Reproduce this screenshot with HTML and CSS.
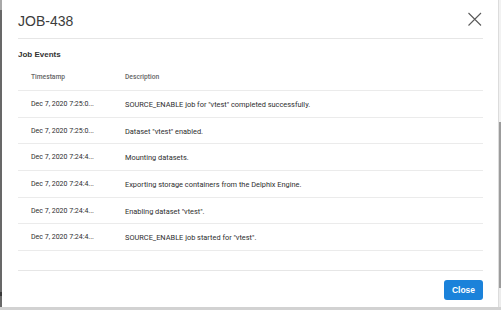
FILE: index.html
```html
<!DOCTYPE html>
<html lang="en">
<head>
  <meta charset="UTF-8">
  <title>JOB-438</title>
  <link rel="stylesheet" href="styles.css">
</head>
<body>
  <!-- page behind the overlay, left edge -->
  <div class="backdrop-edge"></div>

  <!-- Job details modal -->
  <div class="modal">
    <div class="modal-head">
      <span class="modal-title">JOB-438</span>
      <svg class="close-x" width="15" height="15" viewBox="0 0 15 15">
        <path d="M1.5 1 L14 13.5 M14 1 L1.5 13.5" stroke="#5a5a5a" stroke-width="1.1" fill="none"/>
      </svg>
    </div>

    <div class="modal-body">
      <h3>Job Events</h3>
      <div class="events">
        <div class="ev-row ev-head">
          <span>Timestamp</span>
          <span>Description</span>
        </div>
        <div class="ev-row">
          <span class="ts">Dec 7, 2020 7:25:0...</span>
          <span>SOURCE_ENABLE job for "vtest" completed successfully.</span>
        </div>
        <div class="ev-row">
          <span class="ts">Dec 7, 2020 7:25:0...</span>
          <span>Dataset "vtest" enabled.</span>
        </div>
        <div class="ev-row">
          <span class="ts">Dec 7, 2020 7:24:4...</span>
          <span>Mounting datasets.</span>
        </div>
        <div class="ev-row">
          <span class="ts">Dec 7, 2020 7:24:4...</span>
          <span>Exporting storage containers from the Delphix Engine.</span>
        </div>
        <div class="ev-row">
          <span class="ts">Dec 7, 2020 7:24:4...</span>
          <span>Enabling dataset "vtest".</span>
        </div>
        <div class="ev-row">
          <span class="ts">Dec 7, 2020 7:24:4...</span>
          <span>SOURCE_ENABLE job started for "vtest".</span>
        </div>
      </div>
    </div>

    <div class="modal-foot">
      <button type="button">Close</button>
    </div>
  </div>

  <!-- page scrollbar, right edge -->
  <div class="page-scroll"></div>
</body>
</html>
```

FILE: styles.css
```css
body {
  margin: 0;
  height: 310px;
  display: flex;
  align-items: flex-start;
  background: #d2d2d2;
  font-family: 'Liberation Sans', Arial, sans-serif;
  overflow: hidden;
}

.backdrop-edge {
  width: 2px;
  height: 307px;
  background: linear-gradient(#a8a8a8 0, #a8a8a8 10px, #686868 10px, #686868 292px, #3a3a3a 292px, #3a3a3a 296px, #686868 296px);
}

/* Modal */
.modal {
  flex: 1;
  height: 307px;
  background: #fff;
  display: flex;
  flex-direction: column;
  padding: 0 15px 0 16px;
}

.modal-head {
  height: 38px;
  display: flex;
  align-items: flex-start;
  justify-content: space-between;
  border-bottom: 1px solid #e6e6e6;
}

.modal-title {
  margin-top: 13px;
  font-size: 14px;
  line-height: 16px;
  color: #3c3c3c;
}

.close-x {
  margin-top: 12px;
  margin-right: 1px;
}

.modal-body {
  flex: 1;
  overflow: hidden;
}

h3 {
  margin: 11px 0 0 0;
  font-size: 8px;
  line-height: 10px;
  font-weight: bold;
  color: #333;
}

.events {
  font-family: Roboto, 'Liberation Sans', sans-serif;
  font-size: 7.4px;
  color: #2e2e2e;
}

.ev-row {
  display: grid;
  grid-template-columns: 94px 1fr;
  padding: 9px 0 7px 13px;
  line-height: 9.67px;
  border-bottom: 1px solid #ebebeb;
}

.ev-row .ts {
  font-size: 7px;
}

.ev-row.ev-head {
  padding: 12px 0 8px 13px;
  line-height: 10px;
  font-size: 6.7px;
  color: #666;
  font-weight: 500;
}

.modal-foot {
  height: 36px;
  border-top: 1px solid #e6e6e6;
  display: flex;
  justify-content: flex-end;
  align-items: flex-start;
}

button {
  margin-top: 9px;
  width: 39px;
  height: 20px;
  padding: 0;
  border: none;
  border-radius: 3px;
  background: #1b82da;
  color: #fff;
  font-family: 'Liberation Sans', Arial, sans-serif;
  font-size: 8.5px;
  font-weight: bold;
}

.page-scroll {
  width: 2px;
  height: 307px;
  border-left: 1px solid #dcdcdc;
  background: linear-gradient(#f2f2f2 0, #f2f2f2 122px, #9c9c9c 122px, #9c9c9c 288px, #ececec 288px);
}
```
